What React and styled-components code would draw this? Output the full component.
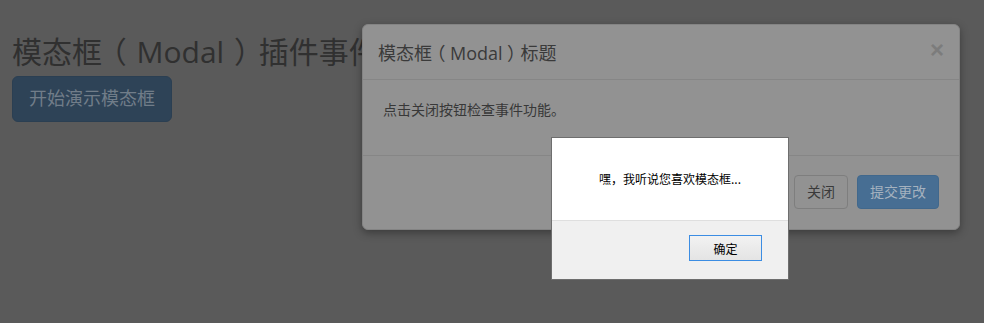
import React from "react";
import styled, { createGlobalStyle } from "styled-components";

const Global = createGlobalStyle`
  html, body { margin: 0; padding: 0; }
  body {
    background: #5a5a5a;
    width: 984px;
    height: 323px;
    overflow: hidden;
    font-family: "Liberation Sans", "Noto Sans CJK SC", sans-serif;
  }
`;

const Page = styled.div`
  position: relative;
  width: 984px;
  height: 323px;
  padding: 0 12px;
  box-sizing: border-box;
`;

const Heading = styled.h2`
  margin: 0;
  padding-top: 34px;
  height: 33px;
  font-family: "Open Sans", "Noto Sans CJK SC", sans-serif;
  font-size: 30px;
  font-weight: 400;
  line-height: 33px;
  color: #303030;
  white-space: nowrap;
`;

const Paren = styled.span`
  display: inline-block;
  width: ${(p) => p.$w || "1em"};
  text-align: center;
  font-family: "Noto Sans CJK SC", sans-serif;
  font-feature-settings: "halt";
  text-spacing-trim: space-all;
`;

const DemoButton = styled.button`
  display: block;
  margin-top: 9px;
  width: 160px;
  height: 46px;
  border: 1px solid #2b3f52;
  border-radius: 6px;
  background: #2e4357;
  color: #717d89;
  font-family: "Liberation Sans", "Noto Sans CJK SC", sans-serif;
  font-size: 18px;
  font-weight: 400;
  line-height: 24px;
  padding: 10px 16px;
  box-sizing: border-box;
`;

const Modal = styled.div`
  position: absolute;
  left: 362px;
  top: 24px;
  width: 598px;
  box-sizing: border-box;
  background: #929292;
  border: 1px solid #848484;
  border-radius: 6px;
  box-shadow: 0 3px 9px rgba(0, 0, 0, 0.35);
  color: #3a3a3a;
`;

const ModalHeader = styled.div`
  display: flex;
  align-items: flex-start;
  justify-content: space-between;
  padding: 15px;
  border-bottom: 1px solid #868686;
`;

const ModalTitle = styled.h4`
  margin: 0;
  height: 24px;
  font-family: "Open Sans", "Noto Sans CJK SC", sans-serif;
  font-size: 18px;
  font-weight: 400;
  line-height: 24px;
  color: #3a3a3a;
  white-space: nowrap;
`;

const Close = styled.span`
  font-family: "Liberation Sans", sans-serif;
  font-size: 24px;
  font-weight: 700;
  line-height: 1;
  color: #7c7c7c;
  margin-top: -2px;
`;

const ModalBody = styled.div`
  padding: 20px;
  font-size: 14px;
  line-height: 20px;
  color: #383838;
`;

const ModalFooter = styled.div`
  margin-top: 15px;
  padding: 19px 20px 20px;
  border-top: 1px solid #868686;
  display: flex;
  justify-content: flex-end;
  gap: 9px;
`;

const FooterButton = styled.button`
  height: 34px;
  padding: 6px 12px;
  box-sizing: border-box;
  border-radius: 4px;
  font-family: "Liberation Sans", "Noto Sans CJK SC", sans-serif;
  font-size: 14px;
  line-height: 20px;
  border: 1px solid ${(p) => (p.$primary ? "#41688c" : "#7e7e7e")};
  background: ${(p) => (p.$primary ? "#476e93" : "#929292")};
  color: ${(p) => (p.$primary ? "#a5b2bf" : "#3a3a3a")};
`;

const Alert = styled.div`
  position: absolute;
  left: 551px;
  top: 137px;
  width: 238px;
  height: 143px;
  box-sizing: border-box;
  border: 1px solid #6e6e6e;
  background: #f0f0f0;
  display: flex;
  flex-direction: column;
  font-family: "Noto Sans CJK SC", sans-serif;
`;

const AlertMessage = styled.div`
  height: 83px;
  background: #ffffff;
  border-bottom: 1px solid #dfdfdf;
  display: flex;
  align-items: center;
  justify-content: center;
  font-size: 12px;
  color: #000;
  padding-bottom: 2px;
  box-sizing: border-box;
`;

const AlertActions = styled.div`
  display: flex;
  justify-content: flex-end;
  padding: 14px 26px 0 0;
`;

const AlertButton = styled.button`
  width: 73px;
  height: 26px;
  box-sizing: border-box;
  border: 1px solid #3c8de3;
  background: linear-gradient(#f2f2f2, #e4e4e4);
  font-family: "Noto Sans CJK SC", sans-serif;
  font-size: 12px;
  color: #000;
  padding: 0;
`;

export default function App() {
  return (
    <>
      <Global />
      <Page>
        <Heading>
          模态框<Paren $w="1.15em">（</Paren>Modal<Paren $w="1.15em">）</Paren>插件事件
        </Heading>
        <DemoButton>开始演示模态框</DemoButton>
        <Modal>
          <ModalHeader>
            <ModalTitle>
              模态框<Paren>（</Paren>Modal<Paren>）</Paren>标题
            </ModalTitle>
            <Close>×</Close>
          </ModalHeader>
          <ModalBody>点击关闭按钮检查事件功能。</ModalBody>
          <ModalFooter>
            <FooterButton>关闭</FooterButton>
            <FooterButton $primary>提交更改</FooterButton>
          </ModalFooter>
        </Modal>
        <Alert>
          <AlertMessage>嘿，我听说您喜欢模态框...</AlertMessage>
          <AlertActions>
            <AlertButton>确定</AlertButton>
          </AlertActions>
        </Alert>
      </Page>
    </>
  );
}
